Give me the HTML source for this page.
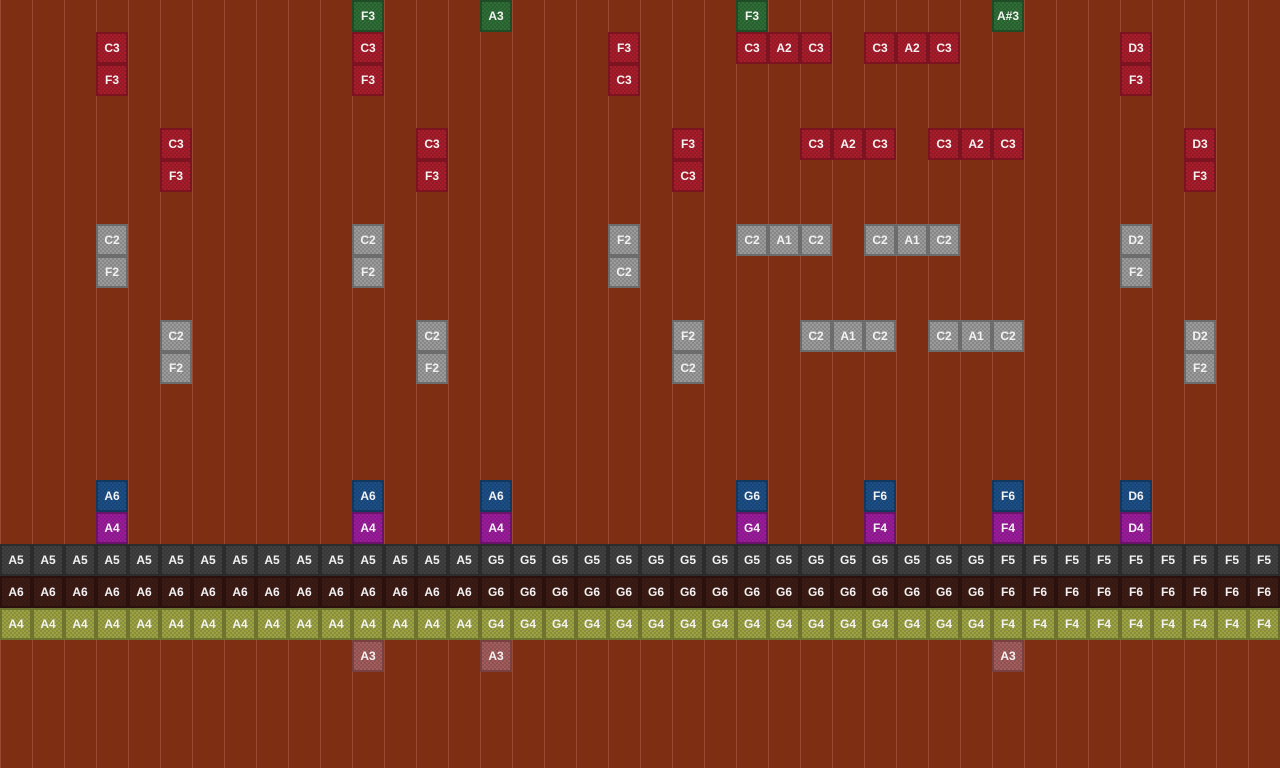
<!DOCTYPE html>
<html><head><meta charset="utf-8"><style>
html,body{margin:0;padding:0}
body{width:1280px;height:768px;overflow:hidden;position:relative;background:#7d2e13;
background-image:linear-gradient(to right,#9a4a32 1px,transparent 1px);background-size:32px 32px;}
.b{position:absolute;width:28px;height:28px;border:2px solid;box-sizing:content-box;color:#f2f2f2;
font:bold 12px/28px "Liberation Sans",sans-serif;text-align:center;
background-image:repeating-conic-gradient(rgba(0,0,0,.12) 0 25%,transparent 0 50%);background-size:4px 4px;}
.r{background-color:#a81d2b;border-color:#7a1420}
.g{background-color:#2f6d36;border-color:#1f4c25}
.s{background-color:#9a9a9a;border-color:#6c6c6c}
.u{background-color:#1b4f86;border-color:#12385f}
.p{background-color:#9b1c9b;border-color:#6b126b}
.d{background-color:#404040;border-color:#2c2c2c}
.n{background-color:#3c1b15;border-color:#2a110d}
.o{background-color:#9ca243;border-color:#6e7430}
.k{background-color:#a25c5c;border-color:#784040}
</style></head><body>
<script>
var L=[
[0,'g',[[11,'F3'],[15,'A3'],[23,'F3'],[31,'A#3']]],
[1,'r',[[3,'C3'],[11,'C3'],[19,'F3'],[23,'C3'],[24,'A2'],[25,'C3'],[27,'C3'],[28,'A2'],[29,'C3'],[35,'D3']]],
[2,'r',[[3,'F3'],[11,'F3'],[19,'C3'],[35,'F3']]],
[4,'r',[[5,'C3'],[13,'C3'],[21,'F3'],[25,'C3'],[26,'A2'],[27,'C3'],[29,'C3'],[30,'A2'],[31,'C3'],[37,'D3']]],
[5,'r',[[5,'F3'],[13,'F3'],[21,'C3'],[37,'F3']]],
[7,'s',[[3,'C2'],[11,'C2'],[19,'F2'],[23,'C2'],[24,'A1'],[25,'C2'],[27,'C2'],[28,'A1'],[29,'C2'],[35,'D2']]],
[8,'s',[[3,'F2'],[11,'F2'],[19,'C2'],[35,'F2']]],
[10,'s',[[5,'C2'],[13,'C2'],[21,'F2'],[25,'C2'],[26,'A1'],[27,'C2'],[29,'C2'],[30,'A1'],[31,'C2'],[37,'D2']]],
[11,'s',[[5,'F2'],[13,'F2'],[21,'C2'],[37,'F2']]],
[15,'u',[[3,'A6'],[11,'A6'],[15,'A6'],[23,'G6'],[27,'F6'],[31,'F6'],[35,'D6']]],
[16,'p',[[3,'A4'],[11,'A4'],[15,'A4'],[23,'G4'],[27,'F4'],[31,'F4'],[35,'D4']]],
[20,'k',[[11,'A3'],[15,'A3'],[31,'A3']]]
];
var h='';
function add(r,c,cl,t){h+='<div class="b '+cl+'" style="left:'+(c*32)+'px;top:'+(r*32)+'px">'+t+'</div>';}
L.forEach(function(l){l[2].forEach(function(x){add(l[0],x[0],l[1],x[1]);});});
var rows=[[17,'d','5'],[18,'n','6'],[19,'o','4']];
rows.forEach(function(r){for(var c=0;c<40;c++){var n=c<15?'A':(c<31?'G':'F');add(r[0],c,r[1],n+r[2]);}});
document.write(h);
</script>
</body></html>
